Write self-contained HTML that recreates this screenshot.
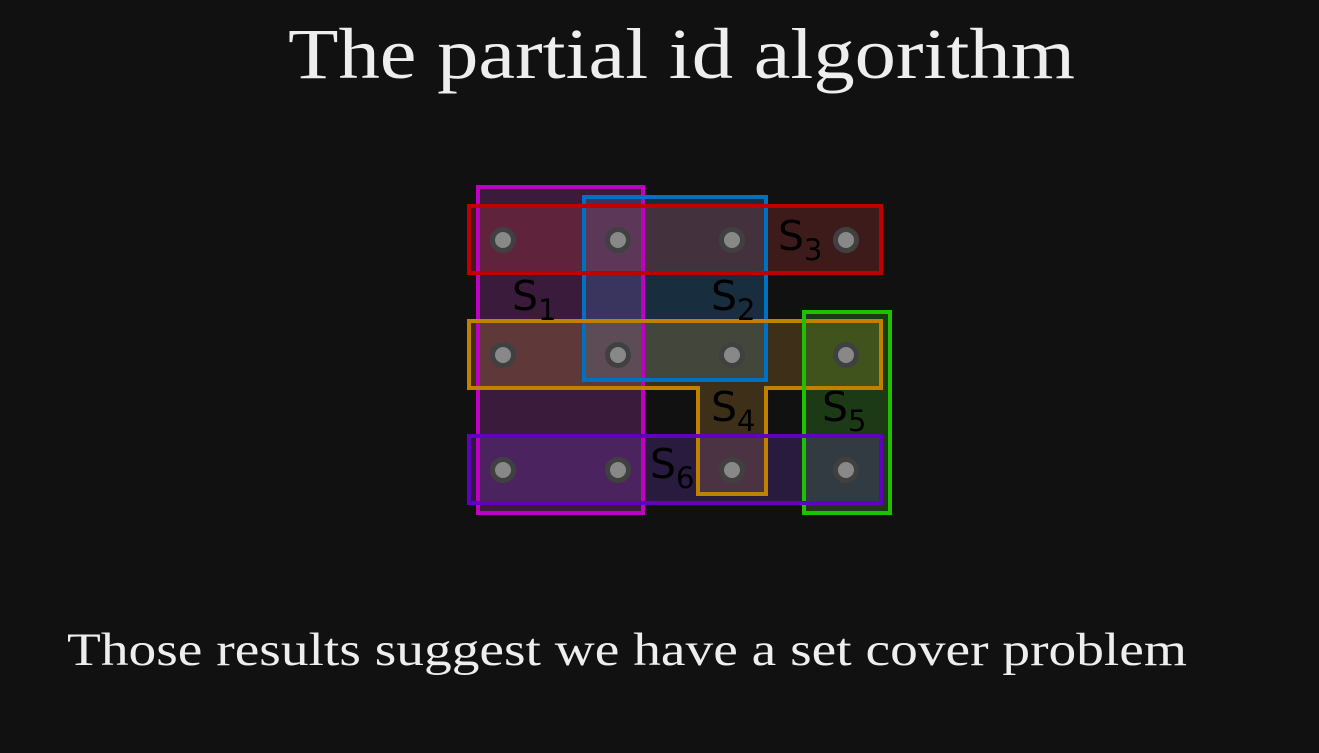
<!DOCTYPE html>
<html><head><meta charset="utf-8"><style>
html,body{margin:0;padding:0;background:#111111;}
svg{display:block}
</style></head><body>
<svg width="1319" height="753" viewBox="0 0 1319 753" xmlns="http://www.w3.org/2000/svg">
<rect width="1319" height="753" fill="#111111"/>
<text x="288" y="78" font-family="Liberation Serif, serif" font-size="72" fill="#eeeeee" textLength="787" lengthAdjust="spacingAndGlyphs">The partial id algorithm</text>
<text x="67" y="665" font-family="Liberation Serif, serif" font-size="47" fill="#eeeeee" textLength="1120" lengthAdjust="spacingAndGlyphs">Those results suggest we have a set cover problem</text>
<g stroke-width="4">
<rect x="478" y="187" width="165" height="326" fill="#d040d0" fill-opacity="0.22" stroke="none"/>
<rect x="584" y="197" width="182" height="183" fill="#3090e0" fill-opacity="0.22" stroke="none"/>
<rect x="469" y="206" width="412" height="67" fill="#e04040" fill-opacity="0.22" stroke="none"/>
<path d="M469 321 H881 V388 H766 V494 H698 V388 H469 Z" fill="#e0a030" fill-opacity="0.22" stroke="none"/>
<rect x="804" y="312" width="86" height="201" fill="#50e030" fill-opacity="0.2" stroke="none"/>
<rect x="469" y="436" width="412" height="67" fill="#8040e0" fill-opacity="0.22" stroke="none"/>
<rect x="478" y="187" width="165" height="326" fill="none" stroke="#c000c0"/>
<rect x="584" y="197" width="182" height="183" fill="none" stroke="#0070c0"/>
<rect x="469" y="206" width="412" height="67" fill="none" stroke="#c00000"/>
<path d="M469 321 H881 V388 H766 V494 H698 V388 H469 Z" fill="none" stroke="#c08000"/>
<rect x="804" y="312" width="86" height="201" fill="none" stroke="#20c000"/>
<rect x="469" y="436" width="412" height="67" fill="none" stroke="#6000c0"/>
</g>
<g fill="#888888" stroke="#404040" stroke-width="5">
<circle cx="503" cy="240" r="10.5"/><circle cx="618" cy="240" r="10.5"/><circle cx="732" cy="240" r="10.5"/><circle cx="846" cy="240" r="10.5"/>
<circle cx="503" cy="355" r="10.5"/><circle cx="618" cy="355" r="10.5"/><circle cx="732" cy="355" r="10.5"/><circle cx="846" cy="355" r="10.5"/>
<circle cx="503" cy="470" r="10.5"/><circle cx="618" cy="470" r="10.5"/><circle cx="732" cy="470" r="10.5"/><circle cx="846" cy="470" r="10.5"/>
</g>
<g font-family="DejaVu Sans, sans-serif" fill="#000000">
<text x="512" y="310" font-size="41">S<tspan font-size="29" dy="10">1</tspan></text>
<text x="711" y="310" font-size="41">S<tspan font-size="29" dy="10">2</tspan></text>
<text x="778" y="250" font-size="41">S<tspan font-size="29" dy="10">3</tspan></text>
<text x="711" y="421" font-size="41">S<tspan font-size="29" dy="10">4</tspan></text>
<text x="822" y="421" font-size="41">S<tspan font-size="29" dy="10">5</tspan></text>
<text x="650" y="478" font-size="41">S<tspan font-size="29" dy="10">6</tspan></text>
</g>
</svg>
</body></html>
